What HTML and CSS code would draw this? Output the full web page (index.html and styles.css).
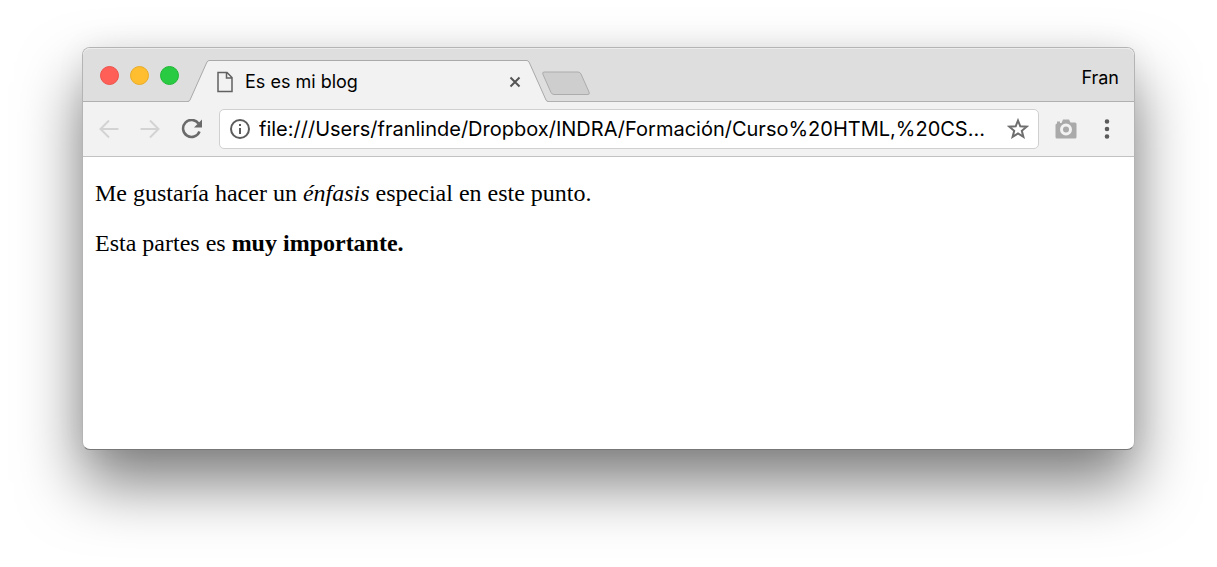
FILE: index.html
```html
<!DOCTYPE html>
<html lang="es">
<head>
<meta charset="utf-8">
<title>Es es mi blog</title>
<link rel="stylesheet" href="styles.css">
</head>
<body>
<div class="window">
  <header class="tab-strip">
    <div class="lights">
      <button class="light light-close" aria-label="Cerrar"></button>
      <button class="light light-min" aria-label="Minimizar"></button>
      <button class="light light-max" aria-label="Maximizar"></button>
    </div>
    <div class="tab">
      <svg class="tab-edge" width="21" height="42" viewBox="0 0 21 42" aria-hidden="true"><path class="tab-fill" d="M0 42C1 41.500 1.500 41 2 40L18.500 3Q19.500.5 21 .5V42Z"/><path class="tab-line" d="M0 41.500Q1.500 41 2 40L18.500 3Q19.500.5 21 .5"/></svg>
      <div class="tab-body">
        <svg width="16" height="22" viewBox="0 0 16 22" aria-hidden="true"><path class="file-line" d="M1 1.500H10L15 6.500V20.500H1ZM9.500 1.500V7H15"/></svg>
        <span class="tab-title">Es es mi blog</span>
        <button class="tab-close" aria-label="Cerrar pestaña"><svg width="12" height="12" viewBox="0 0 12 12"><path d="M1.500 1.500L10.500 10.500M10.500 1.500L1.500 10.500"/></svg></button>
      </div>
      <svg class="tab-edge" width="21" height="42" viewBox="0 0 21 42" aria-hidden="true"><path class="tab-fill" d="M21 42C20 41.500 19.500 41 19 40L2.500 3Q1.500.5 0 .5V42Z"/><path class="tab-line" d="M21 41.500Q19.500 41 19 40L2.500 3Q1.500.5 0 .5"/></svg>
    </div>
    <button class="new-tab" aria-label="Nueva pestaña"><svg width="50" height="25" viewBox="0 0 50 25"><path class="new-tab-shape" d="M3 1H37Q39 1 40 3L48 21Q49 23.500 47 23.500H13Q11 23.500 10 21.500L2 3.500Q1 1 3 1Z"/></svg></button>
    <button class="profile">Fran</button>
  </header>
  <nav class="toolbar">
    <button class="tool off" aria-label="Atrás"><svg width="20" height="20" viewBox="0 0 20 20"><path d="M19.500 10H2M10 1.500L1.500 10L10 18.500"/></svg></button>
    <button class="tool off" aria-label="Adelante"><svg width="20" height="20" viewBox="0 0 20 20"><path d="M.5 10H18M10 1.500L18.500 10L10 18.500"/></svg></button>
    <button class="tool reload" aria-label="Recargar"><svg width="22" height="20" viewBox="0 0 22 20"><path class="reload-arc" d="M17.500 4.500A8.500 8.500 0 1 0 18.500 12.500"/><path class="reload-head" d="M21 .5V8.500H13Z"/></svg></button>
    <div class="omnibox">
      <svg width="22" height="22" viewBox="0 0 22 22" aria-hidden="true"><circle class="info-ring" cx="11" cy="11" r="9"/><path class="info-mark" d="M10 6H12V8H10ZM10 10H12V16H10Z"/></svg>
      <input class="url" type="text" aria-label="Dirección" value="file:///Users/franlinde/Dropbox/INDRA/Formación/Curso%20HTML,%20CS...">
      <button class="star" aria-label="Añadir a marcadores"><svg width="22" height="22" viewBox="0 0 22 22"><path d="M11 2.500L13.300 8.300L19.700 8.700L14.800 12.800L16.400 18.900L11 15.500L5.600 18.900L7.200 12.800L2.300 8.700L8.700 8.300Z"/></svg></button>
    </div>
    <button class="tool camera" aria-label="Captura"><svg width="22" height="20" viewBox="0 0 22 20"><path class="camera-body" d="M2 4.500V2.500H5V4H6.500L8 .5H14L15.500 3.500H20Q21.500 3.500 21.500 5V18Q21.500 19.500 20 19.500H2Q.5 19.500 .5 18V6Q.5 4.500 2 4.500Z"/><circle class="camera-lens" cx="11" cy="10.500" r="4.500"/></svg></button>
    <button class="tool menu" aria-label="Menú"><svg width="6" height="20" viewBox="0 0 6 20"><path class="menu-dots" d="M3 .2A2.300 2.300 0 1 1 3 4.800A2.300 2.300 0 1 1 3 .2ZM3 7.700A2.300 2.300 0 1 1 3 12.300A2.300 2.300 0 1 1 3 7.700ZM3 15.200A2.300 2.300 0 1 1 3 19.800A2.300 2.300 0 1 1 3 15.200Z"/></svg></button>
  </nav>
  <main class="page">
    <p>Me gustaría hacer un <em>énfasis</em> especial en este punto.</p>
    <p>Esta partes es <strong>muy importante.</strong></p>
  </main>
</div>
</body>
</html>
```
FILE: styles.css
```css
* { box-sizing: border-box; }
body {
  margin: 0;
  padding: 47px 82px 0;
  min-height: 100vh;
  background: #fff;
  font-family: Inter, "Liberation Sans", sans-serif;
  color: #000;
  overflow: hidden;
}
button {
  display: flex;
  align-items: center;
  justify-content: center;
  padding: 0;
  border: 0;
  background: none;
  font: inherit;
  color: inherit;
}
svg { display: block; flex: none; fill: none; }
.window {
  background: #fff;
  border: 1px solid #b4b4b4;
  border-bottom-color: #777;
  border-radius: 8px;
  box-shadow: 0 34px 62px rgba(0, 0, 0, 0.5), 0 0 30px rgba(0, 0, 0, 0.06);
}
.tab-strip {
  display: flex;
  align-items: flex-end;
  height: 54px;
  background: #dedede;
  border-bottom: 1px solid #b0b0b0;
  border-radius: 7px 7px 0 0;
  box-shadow: inset 0 1px #ececec;
}
.lights {
  display: flex;
  gap: 11px;
  width: 105px;
  padding: 0 0 16px 17px;
}
.light { width: 19px; height: 19px; border-radius: 50%; border: 1px solid; }
.light-close { background: #ff5f57; border-color: #ed5049; }
.light-min { background: #ffbe2f; border-color: #e9ab25; }
.light-max { background: #28cb41; border-color: #20b735; }
.tab { display: flex; flex: 0 1 360px; margin-bottom: -1px; }
.tab-fill { fill: #f2f2f2; }
.tab-line { stroke: #a9a9a9; }
.tab-body {
  display: flex;
  flex: 1;
  align-items: center;
  gap: 12px;
  height: 42px;
  padding: 0 6px 0 8px;
  border-top: 1px solid #a9a9a9;
  background: #f2f2f2;
}
.file-line { stroke: #616161; stroke-width: 1.5; }
.tab-title { flex: 1; font-size: 18px; }
.tab-close { stroke: #555; stroke-width: 2; }
.new-tab { margin: 0 auto 5px -7px; }
.new-tab-shape { fill: #cecece; stroke: #acacac; }
.profile { padding: 0 15px 13px 0; font-size: 18px; }
.toolbar {
  display: flex;
  align-items: center;
  height: 55px;
  padding: 0 24px 0 16px;
  background: #f2f2f2;
  border-bottom: 1px solid #c2c2c2;
}
.off { margin-right: 21px; stroke: #d3d3d3; stroke-width: 2; }
.reload { margin-right: 16px; }
.reload-arc { stroke: #6a6a6a; stroke-width: 2.5; }
.reload-head { fill: #6a6a6a; }
.omnibox {
  display: flex;
  flex: 1;
  align-items: center;
  height: 40px;
  padding: 0 9px;
  border: 1px solid #d0d0d0;
  border-radius: 5px;
  background: #fff;
}
.info-ring { stroke: #5c5c5c; stroke-width: 2; }
.info-mark { fill: #5c5c5c; }
.url {
  flex: 1;
  min-width: 0;
  padding: 0;
  margin: 0 8px;
  border: 0;
  outline: 0;
  background: none;
  font: 20px Inter, "Liberation Sans", sans-serif;
  color: #000;
}
.star { stroke: #6e6e6e; stroke-width: 2; }
.camera { margin-left: 16px; }
.camera-body { fill: #aaa; }
.camera-lens { fill: #aaa; stroke: #f2f2f2; stroke-width: 3; }
.menu { margin-left: 27px; }
.menu-dots { fill: #5a5a5a; }
.page {
  min-height: 292px;
  padding: 22px 12px;
  font-family: "Liberation Serif", serif;
  font-size: 24px;
  line-height: 28px;
}
.page p { margin: 0 0 22px; }
```
